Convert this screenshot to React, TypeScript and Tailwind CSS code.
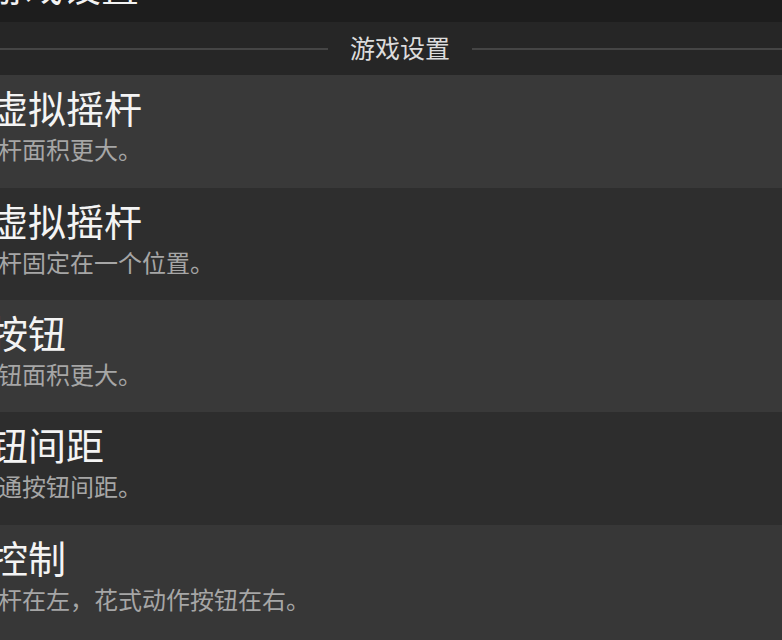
import React from "react";

const rows = [
  { title: "虚拟摇杆", sub: "杆面积更大。", bg: "bg-[#393939]", h: "h-[113px]" },
  { title: "虚拟摇杆", sub: "杆固定在一个位置。", bg: "bg-[#2e2e2e]", h: "h-[112px]" },
  { title: "按钮", sub: "钮面积更大。", bg: "bg-[#393939]", h: "h-[112px]" },
  { title: "钮间距", sub: "通按钮间距。", bg: "bg-[#2d2d2d]", h: "h-[113px]" },
  { title: "控制", sub: "杆在左，花式动作按钮在右。", bg: "bg-[#373737]", h: "h-[118px]" },
];

export default function App() {
  return (
    <div
      className="w-[782px] h-[640px] overflow-hidden bg-[#2e2e2e] flex flex-col"
      style={{ fontFamily: '"Noto Sans CJK SC", "Noto Sans", sans-serif' }}
    >
      <div className="h-[22px] shrink-0 bg-[#1d1d1d] overflow-hidden">
        <div className="ml-[-13px] mt-[-34px] text-[38px] leading-[38px] text-[#f2f2f2] whitespace-nowrap">
          游戏设置
        </div>
      </div>
      <div className="h-[53px] shrink-0 bg-[#262626] flex items-center">
        <div className="w-[328px] h-[2px] bg-[#454545]" />
        <div className="mx-[22px] text-[25px] leading-[25px] text-[#dcdcdc] whitespace-nowrap mt-[-2px]">
          游戏设置
        </div>
        <div className="flex-1 h-[2px] bg-[#454545]" />
      </div>
      {rows.map((r, i) => (
        <div key={i} className={`${r.h} ${r.bg} shrink-0 pt-[13px] overflow-hidden`}>
          <div className="ml-[-10px] text-[38px] leading-[38px] text-[#f4f4f4] whitespace-nowrap">
            {r.title}
          </div>
          <div className="ml-[-2px] mt-[11px] text-[24px] leading-[24px] text-[#a6a6a6] whitespace-nowrap">
            {r.sub}
          </div>
        </div>
      ))}
    </div>
  );
}
